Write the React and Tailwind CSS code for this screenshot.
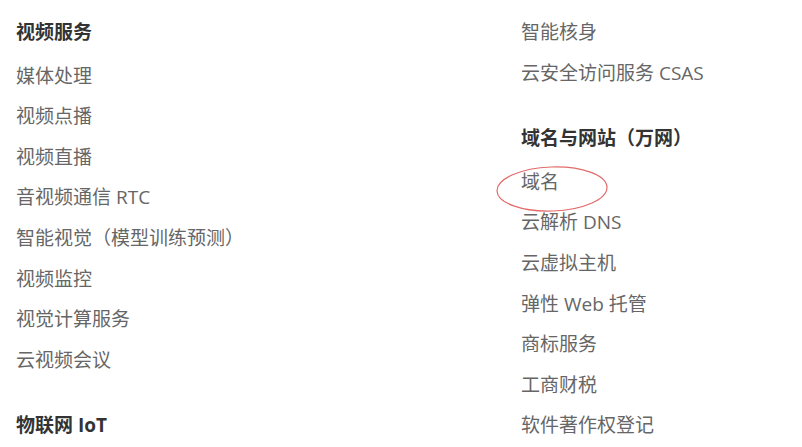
const left = [
  {
    title: '视频服务',
    items: ['媒体处理', '视频点播', '视频直播', '音视频通信 RTC', '智能视觉（模型训练预测）', '视频监控', '视觉计算服务', '云视频会议'],
  },
  { title: '物联网 IoT', items: [] },
]

const right = [
  { title: null, items: ['智能核身', '云安全访问服务 CSAS'] },
  {
    title: '域名与网站（万网）',
    items: ['域名', '云解析 DNS', '云虚拟主机', '弹性 Web 托管', '商标服务', '工商财税', '软件著作权登记'],
  },
]

function Section({ title, items, first }) {
  return (
    <div className={first ? '' : 'mt-[25px]'}>
      {title && (
        <div className="h-[40.6px] mb-[3px] flex items-center text-[19px] font-bold text-[#333]">
          {title}
        </div>
      )}
      {items.map(item => (
        <div key={item} className="h-[40.6px] flex items-center text-[19px] text-[#666]">
          {item}
        </div>
      ))}
    </div>
  )
}

export default function App() {
  return (
    <div
      className="relative w-[802px] h-[447px] overflow-hidden bg-white flex pt-[12px] pl-[16px]"
      style={{ fontFamily: '"Open Sans", "Noto Sans CJK SC", sans-serif' }}
    >
      <div className="w-[505px]">
        {left.map((s, i) => <Section key={i} {...s} first={i === 0} />)}
      </div>
      <div className="flex-1">
        {right.map((s, i) => <Section key={i} {...s} first={i === 0} />)}
      </div>

      <svg className="absolute left-0 top-0 pointer-events-none" width="802" height="447">
        <ellipse cx="552" cy="189" rx="55" ry="22" fill="none" stroke="#e46a6a" strokeWidth="1.2"
          transform="rotate(-2 552 189)" />
      </svg>
    </div>
  )
}
